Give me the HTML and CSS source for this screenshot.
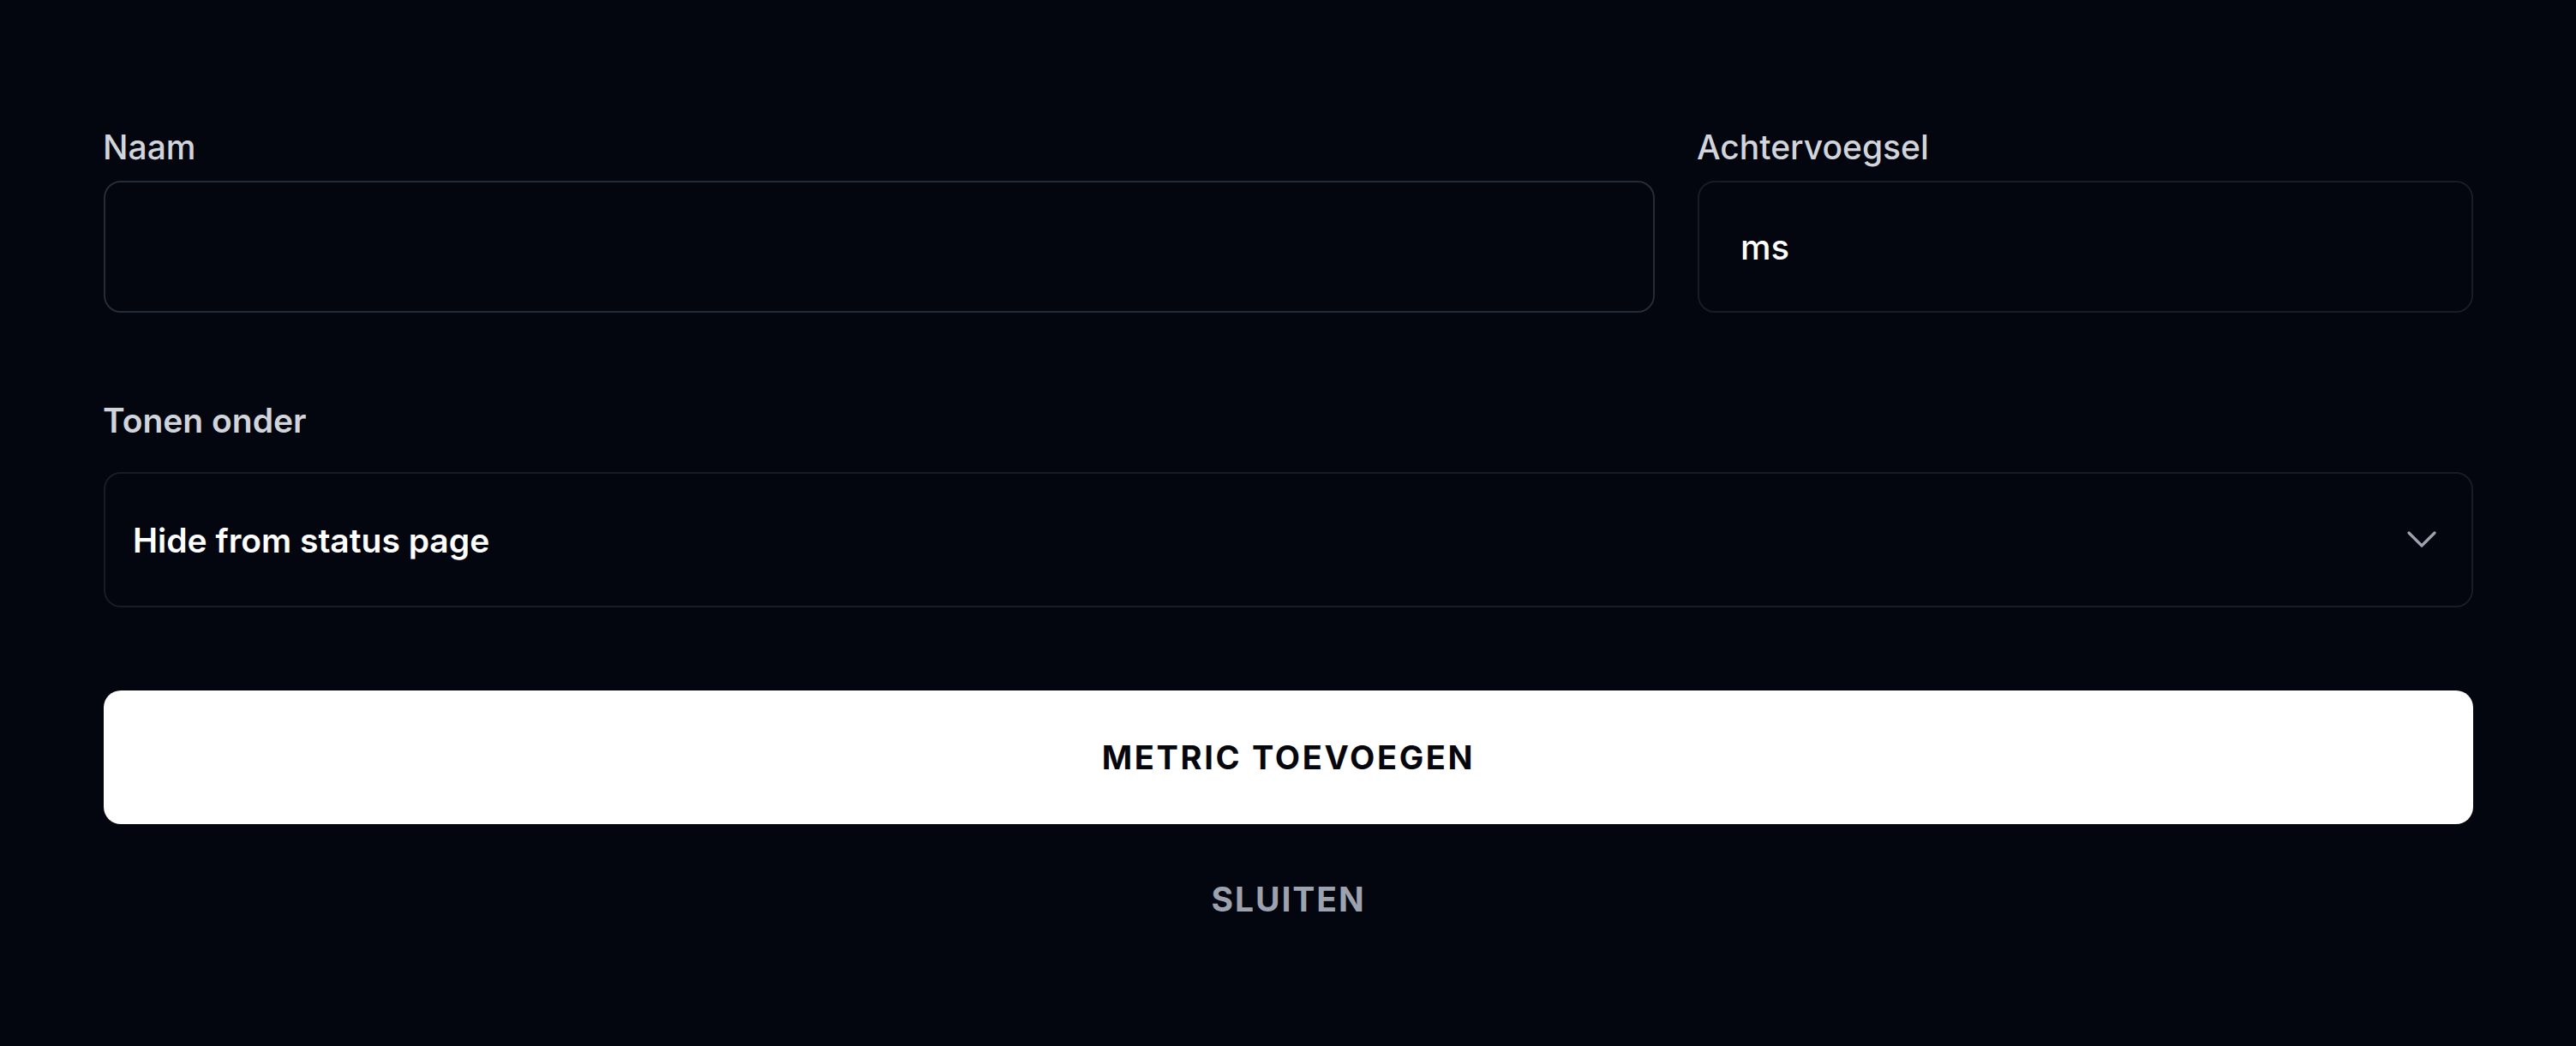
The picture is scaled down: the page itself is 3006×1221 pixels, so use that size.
FILE: index.html
```html
<!DOCTYPE html>
<html lang="nl">
<head>
<meta charset="utf-8">
<title>Metric toevoegen</title>
<link rel="stylesheet" href="styles.css">
</head>
<body>
<form class="form">
  <div class="row-two">
    <div class="field">
      <label class="label">Naam</label>
      <div class="input input-focus"></div>
    </div>
    <div class="field">
      <label class="label">Achtervoegsel</label>
      <div class="input"><span class="input-value">ms</span></div>
    </div>
  </div>
  <div class="field field-select">
    <label class="label label-strong">Tonen onder</label>
    <div class="select">
      <span class="select-value">Hide from status page</span>
      <svg class="chevron" width="34" height="20" viewBox="0 0 34 20" fill="none">
        <path d="M2 2 L17 17 L32 2" stroke="#9ca3af" stroke-width="3.2" stroke-linecap="round" stroke-linejoin="round"/>
      </svg>
    </div>
  </div>
  <button type="button" class="btn-primary">METRIC TOEVOEGEN</button>
  <button type="button" class="btn-close">SLUITEN</button>
</form>
</body>
</html>
```
FILE: styles.css
```css
html, body {
  margin: 0;
  padding: 0;
  background: #03060f;
}
body {
  font-family: Inter, "Noto Sans", "Liberation Sans", sans-serif;
  color: #ffffff;
  width: 3006px;
  height: 1221px;
  overflow: hidden;
}
.form {
  display: flex;
  flex-direction: column;
  padding: 143px 120px 0 121px;
}
.row-two {
  display: grid;
  grid-template-columns: 2fr 1fr;
  column-gap: 50px;
}
.field {
  display: flex;
  flex-direction: column;
}
.label {
  font-size: 39px;
  line-height: 57px;
  font-weight: 500;
  color: #d1d5db;
  margin-bottom: 11px;
  margin-left: -1px;
}
.label-strong {
  font-weight: 600;
}
.input {
  box-sizing: border-box;
  height: 154px;
  border: 2px solid #171c27;
  border-radius: 20px;
  background: #03060f;
  display: flex;
  align-items: center;
  padding-left: 48px;
}
.input-focus {
  border-color: #252c39;
}
.input-value {
  font-size: 40px;
  font-weight: 500;
  color: #ffffff;
}
.field-select {
  margin-top: 97px;
}
.field-select .label {
  margin-bottom: 32px;
}
.select {
  box-sizing: border-box;
  height: 158px;
  border: 2px solid #171c27;
  border-radius: 20px;
  display: flex;
  align-items: center;
  justify-content: space-between;
  padding: 0 41px 0 32px;
}
.select-value {
  font-size: 39px;
  font-weight: 600;
  color: #ffffff;
}
.chevron {
  display: block;
}
.btn-primary {
  margin-top: 97px;
  height: 156px;
  border: none;
  border-radius: 20px;
  background: #ffffff;
  color: #05070d;
  font-family: inherit;
  font-size: 38px;
  font-weight: 700;
  letter-spacing: 0.07em;
  cursor: pointer;
}
.btn-close {
  margin-top: 64px;
  align-self: center;
  background: transparent;
  border: none;
  color: #9ca3af;
  font-family: inherit;
  font-size: 39px;
  font-weight: 700;
  letter-spacing: 0.05em;
  padding: 0;
  cursor: pointer;
}
```
